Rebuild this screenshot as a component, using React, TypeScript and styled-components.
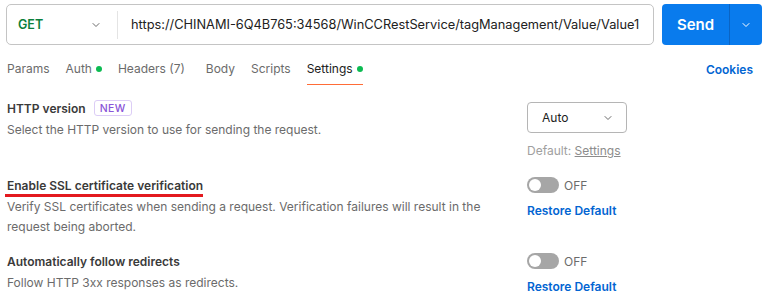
import React from "react";
import styled, { createGlobalStyle } from "styled-components";

const GlobalStyle = createGlobalStyle`
  body {
    margin: 0;
    background: #ffffff;
    font-family: Inter, "Noto Sans", sans-serif;
    font-size: 12px;
    color: #212121;
  }
`;

const Page = styled.div`
  width: 766px;
  height: 304px;
  overflow: hidden;
  padding: 4px 4px 0 6px;
  box-sizing: border-box;
`;

const RequestBar = styled.div`
  display: flex;
  gap: 8px;
  height: 41px;
`;

const UrlBox = styled.div`
  flex: 1;
  display: flex;
  align-items: center;
  border: 1px solid #c4c4c4;
  border-radius: 5px;
  box-sizing: border-box;
`;

const Method = styled.div`
  width: 110px;
  display: flex;
  align-items: center;
  justify-content: space-between;
  padding: 0 16px 0 11px;
  box-sizing: border-box;
  color: #0b7f3c;
  font-weight: 600;
  font-size: 12.5px;
`;

const Divider = styled.div`
  width: 1px;
  height: 28px;
  background: #e4e4e4;
`;

const UrlText = styled.div`
  padding-left: 13px;
  color: #212121;
  font-size: 12.8px;
  white-space: nowrap;
`;

const SendButton = styled.div`
  width: 100px;
  display: flex;
  background: #097bed;
  border-radius: 4px;
  color: #ffffff;
`;

const SendLabel = styled.div`
  width: 67px;
  display: flex;
  align-items: center;
  justify-content: center;
  font-weight: 600;
  font-size: 15px;
  border-right: 1px solid #0a64c4;
`;

const SendArrow = styled.div`
  flex: 1;
  display: flex;
  align-items: center;
  justify-content: center;
`;

const TabRow = styled.div`
  display: flex;
  align-items: stretch;
  justify-content: space-between;
  margin-top: 13px;
  height: 27px;
  padding-left: 1px;
  padding-right: 9px;
`;

const Tabs = styled.div`
  display: flex;
  gap: 16px;
`;

const Tab = styled.div<{ $active?: boolean; $extra?: number }>`
  display: flex;
  align-items: center;
  gap: 4px;
  margin-right: ${(p) => p.$extra ?? 0}px;
  padding-bottom: 5px;
  color: ${(p) => (p.$active ? "#212121" : "#6b6b6b")};
  border-bottom: 1px solid ${(p) => (p.$active ? "#ff6c37" : "transparent")};
  box-sizing: border-box;
`;

const Dot = styled.span`
  width: 6px;
  height: 6px;
  border-radius: 50%;
  background: #0cbb52;
`;

const Link = styled.div`
  display: flex;
  align-items: center;
  color: #0265d2;
  font-weight: 600;
`;

const CookiesLink = styled(Link)`
  padding-bottom: 5px;
`;

const SettingsList = styled.div`
  display: flex;
  flex-direction: column;
  gap: 14px;
  margin-top: 13px;
  padding-left: 1px;
`;

const SettingRow = styled.div`
  display: grid;
  grid-template-columns: 520px 1fr;
`;

const Info = styled.div`
  max-width: 490px;
`;

const Title = styled.div`
  display: flex;
  align-items: center;
  gap: 8px;
  height: 20px;
  font-weight: 600;
  color: #3a3a3a;
  margin-bottom: 2px;
`;

const Marked = styled.span`
  position: relative;
  &::after {
    content: "";
    position: absolute;
    left: -2px;
    right: 0;
    bottom: -4px;
    height: 3px;
    background: #e3191f;
  }
`;

const Badge = styled.span`
  border: 1px solid #dccdf6;
  border-radius: 3px;
  color: #8a55d8;
  font-size: 10.5px;
  font-weight: 500;
  letter-spacing: 0.4px;
  padding: 0 5px;
  height: 16px;
  line-height: 15px;
  box-sizing: border-box;
`;

const Description = styled.div`
  color: #6b6b6b;
  line-height: 20px;
`;

const Controls = styled.div`
  display: flex;
  flex-direction: column;
  align-items: flex-start;
`;

const Select = styled.div`
  margin-top: 4px;
  width: 100px;
  height: 31px;
  border: 1px solid #b5b5b5;
  border-radius: 4px;
  box-sizing: border-box;
  display: flex;
  align-items: center;
  justify-content: space-between;
  padding: 0 13px 0 14px;
  color: #212121;
`;

const Hint = styled.div`
  margin-top: 8px;
  line-height: 20px;
  color: #a0a0a0;
  u {
    color: #8c8c8c;
    text-decoration-color: #8c8c8c;
  }
`;

const ToggleLine = styled.div`
  display: flex;
  align-items: center;
  gap: 5px;
  height: 20px;
  color: #6b6b6b;
`;

const Switch = styled.span`
  width: 32px;
  height: 16px;
  border-radius: 8px;
  background: #a6a6a6;
  display: flex;
  align-items: center;
  padding-left: 2px;
  box-sizing: border-box;
  &::before {
    content: "";
    width: 12px;
    height: 12px;
    border-radius: 50%;
    background: #ffffff;
  }
`;

const Restore = styled(Link)`
  margin-top: 6px;
  line-height: 20px;
`;

const Chevron = ({ color, size = 10 }: { color: string; size?: number }) => (
  <svg width={size} height={size} viewBox="0 0 10 10" fill="none">
    <path d="M2 3.5 L5 6.5 L8 3.5" stroke={color} strokeWidth="1" strokeLinecap="round" strokeLinejoin="round" />
  </svg>
);

export default function App() {
  return (
    <>
      <GlobalStyle />
      <Page>
        <RequestBar>
          <UrlBox>
            <Method>
              GET
              <Chevron color="#6b6b6b" />
            </Method>
            <Divider />
            <UrlText>https://CHINAMI-6Q4B765:34568/WinCCRestService/tagManagement/Value/Value1</UrlText>
          </UrlBox>
          <SendButton>
            <SendLabel>Send</SendLabel>
            <SendArrow>
              <Chevron color="#ffffff" />
            </SendArrow>
          </SendButton>
        </RequestBar>

        <TabRow>
          <Tabs>
            <Tab>Params</Tab>
            <Tab>
              Auth <Dot />
            </Tab>
            <Tab $extra={5}>Headers (7)</Tab>
            <Tab>Body</Tab>
            <Tab>Scripts</Tab>
            <Tab $active>
              Settings <Dot />
            </Tab>
          </Tabs>
          <CookiesLink>Cookies</CookiesLink>
        </TabRow>

        <SettingsList>
          <SettingRow>
            <Info>
              <Title>
                HTTP version <Badge>NEW</Badge>
              </Title>
              <Description>Select the HTTP version to use for sending the request.</Description>
            </Info>
            <Controls>
              <Select>
                Auto
                <Chevron color="#6b6b6b" />
              </Select>
              <Hint>
                Default: <u>Settings</u>
              </Hint>
            </Controls>
          </SettingRow>

          <SettingRow>
            <Info>
              <Title>
                <Marked>Enable SSL certificate verification</Marked>
              </Title>
              <Description>
                Verify SSL certificates when sending a request. Verification failures will result in the request being
                aborted.
              </Description>
            </Info>
            <Controls>
              <ToggleLine>
                <Switch />
                OFF
              </ToggleLine>
              <Restore>Restore Default</Restore>
            </Controls>
          </SettingRow>

          <SettingRow>
            <Info>
              <Title>Automatically follow redirects</Title>
              <Description>Follow HTTP 3xx responses as redirects.</Description>
            </Info>
            <Controls>
              <ToggleLine>
                <Switch />
                OFF
              </ToggleLine>
              <Restore>Restore Default</Restore>
            </Controls>
          </SettingRow>
        </SettingsList>
      </Page>
    </>
  );
}
